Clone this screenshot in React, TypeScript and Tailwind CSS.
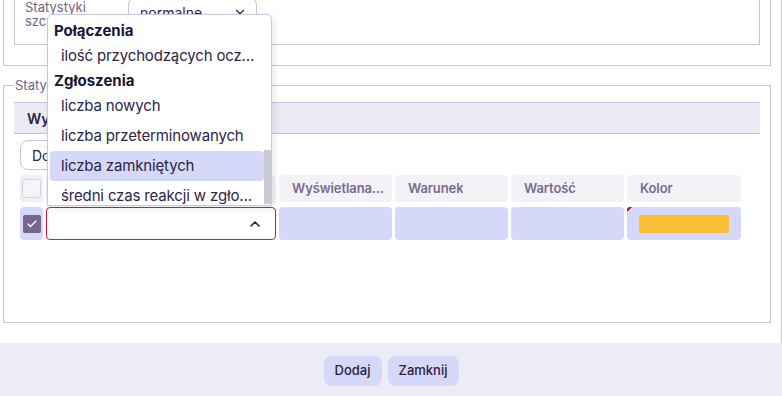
import { ChevronDown, ChevronUp, Check } from "lucide-react";

const groups = [
  { title: "Połączenia", items: ["ilość przychodzących oczekujących"] },
  {
    title: "Zgłoszenia",
    items: ["liczba nowych", "liczba przeterminowanych", "liczba zamkniętych", "średni czas reakcji w zgłoszeniach"],
  },
];

function MetricDropdown() {
  return (
    <div className="absolute left-0 bottom-full mb-[2px] w-[225px] h-[192px] bg-white border border-[#c9c8e2] rounded-t-[5px] shadow-[2px_2px_6px_rgba(60,50,110,0.12)] flex overflow-hidden z-20">
      <div className="flex-1 min-w-0 flex flex-col pt-[6px]">
        {groups.map((g) => (
          <div key={g.title} className="flex flex-col min-w-0">
            <div className="h-[20px] flex items-center pl-[6px] text-[15px] font-bold text-[#1d1535]">{g.title}</div>
            {g.items.map((it) => (
              <div
                key={it}
                className={
                  "h-[30px] shrink-0 min-w-0 flex items-center ml-[2px] pl-[11px] pr-[4px] rounded-[4px] text-[15px] tracking-[-0.15px] text-[#2e2546] " +
                  (it === "liczba zamkniętych" ? "bg-[#d5d8f8]" : "")
                }
              >
                <span className="block min-w-0 truncate">{it}</span>
              </div>
            ))}
          </div>
        ))}
      </div>
      <div className="w-[7px] shrink-0 flex flex-col justify-end">
        <div className="h-[54px] mb-[1px] bg-[#cbcbd4]" />
      </div>
    </div>
  );
}

export default function App() {
  return (
    <div className="w-[782px] h-[396px] bg-white flex flex-col overflow-hidden font-['Inter',sans-serif]">
      <div className="h-[343px] shrink-0 overflow-hidden border-r border-[#c5c4df]">
        <div className="-mt-[40px] flex flex-col">
          {/* first section */}
          <div className="ml-[3px] w-[768px] border border-[#c5c4df] pt-[12px] px-[10px] pb-[20px]">
            <div className="border border-[#c5c4df] pt-[26px] pb-[16px] pl-[10px] flex items-start">
              <div className="w-[103px] text-[13px] leading-[14px] text-[#6e6585]">
                Statystyki
                <br />
                szczeg.
              </div>
              <div className="w-[129px] h-[30px] -mt-[3px] border border-[#c5c4df] rounded-lg flex items-center justify-between pl-[11px] pr-[9px] text-[14px] text-[#2e2546]">
                <span>normalne</span>
                <ChevronDown className="w-[14px] h-[14px]" strokeWidth={2} />
              </div>
            </div>
          </div>

          {/* second section */}
          <div className="ml-[3px] mt-[19px] w-[768px] h-[238px] border border-[#c5c4df] flex flex-col">
            <span className="-mt-[9px] ml-[10px] w-fit bg-white px-[1px] text-[13px] leading-[16px] text-[#6e6585]">
              Statystyki
            </span>
            <div className="mt-[9px] mx-[10px] h-[32px] bg-[#ebebf5] border-y border-[#c5c4df] flex items-center pl-[13px] text-[14px] font-semibold text-[#2e2546]">
              Wykres
            </div>
            <div className="ml-[16px] mt-[6px] w-fit h-[30px] border border-[#c5c4df] rounded-lg bg-white flex items-center px-[11px] text-[14px] text-[#2e2546]">
              Dodaj
            </div>

            <div className="ml-[16px] mt-[5px] grid grid-cols-[23px_230px_113px_113px_113px_114px] grid-rows-[27px_33px] gap-x-[3px] gap-y-[5px]">
              <div className="rounded-[4px] bg-[#efeff5] flex items-center justify-center">
                <div className="w-[19px] h-[19px] rounded-[3px] border border-[#d3d2e4] bg-[#f4f4f9]" />
              </div>
              <div className="rounded-[4px] bg-[#f2f2f7]" />
              {["Wyświetlana nazwa", "Warunek", "Wartość", "Kolor"].map((h) => (
                <div key={h} className="rounded-[4px] bg-[#f2f2f7] flex items-center pl-[13px] pr-[7px] text-[13px] font-semibold text-[#7a6a8f] min-w-0">
                  <span className="block min-w-0 truncate tracking-[-0.1px]">{h}</span>
                </div>
              ))}

              <div className="rounded-[4px] bg-[#d5d8f8] flex items-center justify-center">
                <div className="w-[18px] h-[18px] rounded-[2px] bg-[#776790] flex items-center justify-center">
                  <Check className="w-[12px] h-[12px] text-white" strokeWidth={2.5} />
                </div>
              </div>
              <div className="relative rounded-[4px] border border-[#e5132c] bg-white flex items-center justify-end pr-[12px]">
                <ChevronUp className="w-[16px] h-[16px] text-[#2e2546]" strokeWidth={2.5} />
                <MetricDropdown />
              </div>
              <div className="rounded-[4px] bg-[#d5d8f8]" />
              <div className="rounded-[4px] bg-[#d5d8f8]" />
              <div className="rounded-[4px] bg-[#d5d8f8]" />
              <div className="relative rounded-[4px] bg-[#d5d8f8] flex items-center pl-[12px]">
                <div className="absolute left-0 top-0 w-0 h-0 border-t-[5px] border-r-[5px] border-t-[#c0001a] border-r-transparent rounded-tl-[3px]" />
                <div className="w-[90px] h-[18px] bg-[#fbbf36]" />
              </div>
            </div>
          </div>
        </div>
      </div>

      <div className="flex-1 bg-[#ececf6] flex items-start justify-center gap-[6px] pt-[13px]">
        <button className="h-[30px] w-[58px] rounded-lg bg-[#d5d8f9] text-[13px] font-medium text-[#2b2140]">Dodaj</button>
        <button className="h-[30px] w-[71px] rounded-lg bg-[#d5d8f9] text-[13px] font-medium text-[#2b2140]">Zamknij</button>
      </div>
    </div>
  );
}
